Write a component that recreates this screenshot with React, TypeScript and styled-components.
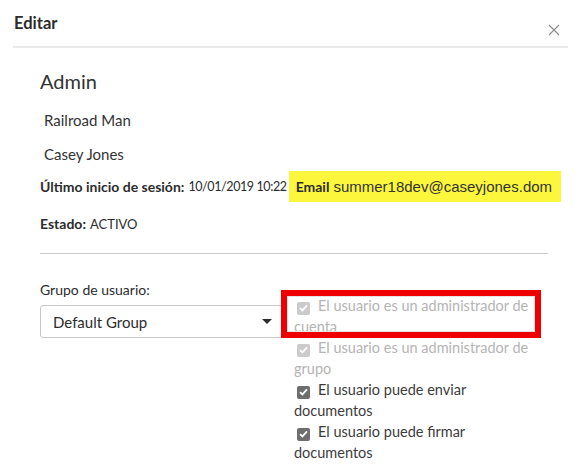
import styled, { createGlobalStyle } from "styled-components";

const GlobalStyle = createGlobalStyle`
  body {
    margin: 0;
    background: #ffffff;
    font-family: Lato, "Noto Sans", sans-serif;
    color: #2c2c2c;
  }
`;

const Modal = styled.div`
  width: 586px;
  height: 473px;
  overflow: hidden;
`;

const Header = styled.div`
  display: flex;
  justify-content: space-between;
  align-items: flex-start;
  height: 46px;
  margin: 0 18px 0 13px;
  border-bottom: 2px solid #e9e9e9;
  box-sizing: content-box;
`;

const Title = styled.h1`
  margin: 13px 0 0 1px;
  font-size: 16.5px;
  line-height: 20px;
  font-weight: 700;
  color: #2c2c2c;
`;

const CloseButton = styled.button`
  margin: 24px 8px 0 0;
  padding: 0;
  border: none;
  background: none;
  width: 12px;
  height: 12px;
  display: flex;
  cursor: pointer;
`;

const Body = styled.div`
  padding: 0 38px 0 40px;
`;

const Role = styled.h2`
  margin: 20px 0 0;
  font-size: 20px;
  line-height: 26px;
  font-weight: 400;
  color: #333;
`;

const Name = styled.p<{ $gap: number }>`
  margin: ${(p) => p.$gap}px 0 0 4px;
  font-size: 15px;
  line-height: 22px;
  color: #333;
`;

const InfoRow = styled.div`
  display: flex;
  align-items: center;
  height: 31px;
  margin-top: 6px;
  white-space: nowrap;
`;

const Label = styled.span`
  font-size: 14px;
  font-weight: 700;
  margin-right: 4px;
`;

const DateValue = styled.span`
  font-size: 12.5px;
  letter-spacing: -0.4px;
`;

const Highlight = styled.span`
  display: flex;
  align-items: center;
  height: 31px;
  margin-left: 2px;
  padding: 0 9px 0 7px;
  background: #fcf73c;
`;

const EmailValue = styled.span`
  font-family: "Liberation Sans", Arial, sans-serif;
  font-size: 15px;
  color: #333;
`;

const StatusRow = styled.p`
  margin: 11px 0 0;
  font-size: 13px;
  line-height: 22px;
`;

const Divider = styled.hr`
  margin: 18px 0 0;
  border: none;
  border-top: 1px solid #c9c9c9;
`;

const FormGrid = styled.div`
  display: grid;
  grid-template-columns: 243px 240px;
  column-gap: 11px;
  margin-top: 26px;
`;

const Field = styled.div`
  display: flex;
  flex-direction: column;
  gap: 5px;
`;

const FieldLabel = styled.label`
  font-size: 14px;
  line-height: 20px;
  color: #2c2c2c;
`;

const Select = styled.div`
  display: flex;
  align-items: center;
  justify-content: space-between;
  height: 33px;
  box-sizing: border-box;
  padding: 0 10px 0 12px;
  border: 1px solid #c8c8c8;
  border-radius: 3px;
  font-size: 15px;
  color: #2c2c2c;
`;

const Caret = styled.span`
  width: 0;
  height: 0;
  border-left: 5px solid transparent;
  border-right: 5px solid transparent;
  border-top: 5px solid #2c2c2c;
`;

const CheckList = styled.div`
  padding-top: 15px;
`;

const CheckItem = styled.div<{ $disabled?: boolean; $flagged?: boolean }>`
  position: relative;
  font-size: 14.5px;
  line-height: 21px;
  color: ${(p) => (p.$disabled ? "#b4b4b4" : "#3c3c3c")};

  ${(p) =>
    p.$flagged &&
    `
    &::after {
      content: "";
      position: absolute;
      left: -13px;
      top: -5px;
      width: 260px;
      height: 48px;
      box-sizing: border-box;
      border: 6px solid #ee0000;
      box-shadow: inset 0 0 0 1px #e4e4e4;
      pointer-events: none;
    }
  `}
`;

const Box = styled.span<{ $disabled?: boolean }>`
  display: inline-flex;
  align-items: center;
  justify-content: center;
  width: 13px;
  height: 13px;
  margin: 0 8px 0 3px;
  vertical-align: -1px;
  border-radius: 2px;
  background: ${(p) => (p.$disabled ? "#cbcbcb" : "#6e6e6e")};
`;

const checks = [
  { text: "El usuario es un administrador de cuenta", disabled: true, flagged: true },
  { text: "El usuario es un administrador de grupo", disabled: true },
  { text: "El usuario puede enviar documentos" },
  { text: "El usuario puede firmar documentos" },
];

function App() {
  return (
    <>
      <GlobalStyle />
      <Modal>
        <Header>
          <Title>Editar</Title>
          <CloseButton aria-label="Cerrar">
            <svg width="12" height="12" viewBox="0 0 12 12">
              <path d="M1 1 L11 11 M11 1 L1 11" stroke="#8a8a8a" strokeWidth="1.1" fill="none" />
            </svg>
          </CloseButton>
        </Header>
        <Body>
          <Role>Admin</Role>
          <Name $gap={15}>Railroad Man</Name>
          <Name $gap={12}>Casey Jones</Name>
          <InfoRow>
            <Label>Último inicio de sesión:</Label>
            <DateValue>10/01/2019 10:22</DateValue>
            <Highlight>
              <Label>Email</Label>
              <EmailValue>summer18dev@caseyjones.dom</EmailValue>
            </Highlight>
          </InfoRow>
          <StatusRow>
            <Label>Estado:</Label>ACTIVO
          </StatusRow>
          <Divider />
          <FormGrid>
            <Field>
              <FieldLabel>Grupo de usuario:</FieldLabel>
              <Select>
                Default Group
                <Caret />
              </Select>
            </Field>
            <CheckList>
              {checks.map((c) => (
                <CheckItem key={c.text} $disabled={c.disabled} $flagged={c.flagged}>
                  <Box $disabled={c.disabled}>
                    <svg width="9" height="8" viewBox="0 0 9 8">
                      <path d="M1 4.2 L3.4 6.4 L8 1.4" stroke="#fff" strokeWidth="1.8" fill="none" />
                    </svg>
                  </Box>
                  {c.text}
                </CheckItem>
              ))}
            </CheckList>
          </FormGrid>
        </Body>
      </Modal>
    </>
  );
}

export default App;
